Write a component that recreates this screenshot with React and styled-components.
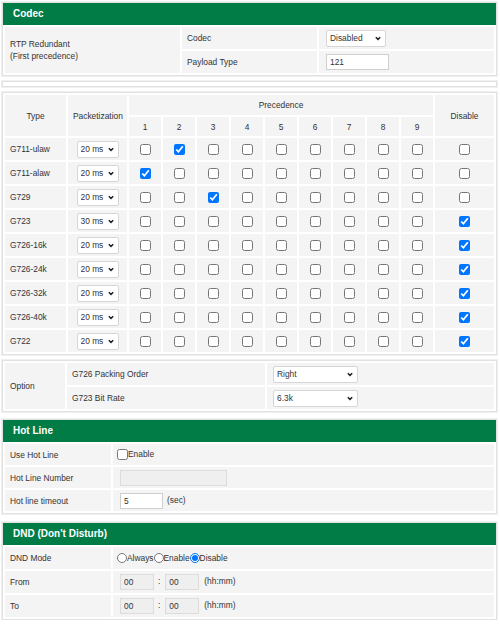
import React from "react";
import styled, { createGlobalStyle } from "styled-components";

const GREEN = "#027c46";

const Global = createGlobalStyle`
  body {
    margin: 0;
    background: #fff;
    font-family: "Liberation Sans", Arial, sans-serif;
    font-size: 8.4px;
    color: #333;
  }
`;

const Page = styled.div`
  width: 495px;
  margin: 2px 0 0 2px;
  display: flex;
  flex-direction: column;
  gap: 5px;
`;

const Panel = styled.div`
  border: 1px solid #e2e2e2;
  box-shadow: 0 0 0 1px #f0f0f0;
  background: #fff;
  margin-top: ${(p) => p.$mt || 0}px;
`;

const Spacer = styled(Panel)`
  height: 4px;
`;

const Header = styled.div`
  background: ${GREEN};
  color: #fff;
  font-weight: bold;
  font-size: 10px;
  height: 22px;
  line-height: 22px;
  padding-left: 10px;
`;

const Table = styled.table`
  width: 100%;
  border-spacing: 2px;
  table-layout: fixed;
`;

const Cell = styled.td`
  background: #f4f4f4;
  height: ${(p) => p.$h || 21}px;
  padding: 0 ${(p) => (p.$pad != null ? p.$pad : 5)}px;
  text-align: ${(p) => p.$align || "left"};
  vertical-align: middle;
  white-space: nowrap;
  line-height: 12px;
`;

const HeadCell = styled(Cell).attrs({ as: "th" })`
  font-weight: normal;
`;

const SelectWrap = styled.span`
  position: relative;
  display: inline-block;
  vertical-align: middle;
  width: ${(p) => p.$w}px;
  height: 17px;
`;

const NativeSelect = styled.select`
  appearance: none;
  -webkit-appearance: none;
  font-family: "Liberation Sans", Arial, sans-serif;
  font-size: 8.4px;
  color: #333;
  width: 100%;
  height: 17px;
  box-sizing: border-box;
  padding: 0 12px 0 3px;
  margin: 0;
  border: 1px solid #d6d6d6;
  border-radius: 2px;
  background: #fff;
  display: block;
`;

const Chevron = styled.svg`
  position: absolute;
  right: 5px;
  top: 6px;
  width: 6px;
  height: 5px;
  pointer-events: none;
`;

const Select = ({ w, value, options }) => (
  <SelectWrap $w={w}>
    <NativeSelect defaultValue={value}>
      {options.map((o) => (
        <option key={o}>{o}</option>
      ))}
    </NativeSelect>
    <Chevron viewBox="0 0 6 5">
      <path d="M0.8 1.2 L3 3.4 L5.2 1.2" fill="none" stroke="#222" strokeWidth="1.5" />
    </Chevron>
  </SelectWrap>
);

const Input = styled.input`
  font-family: "Liberation Sans", Arial, sans-serif;
  font-size: 8.4px;
  color: #333;
  height: 16px;
  width: ${(p) => p.$w}px;
  box-sizing: border-box;
  padding: 0 3px;
  border: 1px solid ${(p) => (p.disabled ? "#dcdcdc" : "#cfcfcf")};
  background: ${(p) => (p.disabled ? "#efefef" : "#fff")};
  vertical-align: middle;
  margin-left: ${(p) => p.$ml || 0}px;
`;

const Check = styled.input`
  margin: 0;
  width: 11px;
  height: 11px;
  vertical-align: middle;
`;

const Inline = styled.label`
  display: inline-flex;
  align-items: center;
  margin-top: 2px;
`;

const Radio = styled.input`
  margin: 0;
  width: 10px;
  height: 10px;
`;

const Note = styled.span`
  margin-left: ${(p) => p.$ml || 4}px;
`;

const codecs = [
  ["G711-ulaw", "20 ms", 2, false],
  ["G711-alaw", "20 ms", 1, false],
  ["G729", "20 ms", 3, false],
  ["G723", "30 ms", 0, true],
  ["G726-16k", "20 ms", 0, true],
  ["G726-24k", "20 ms", 0, true],
  ["G726-32k", "20 ms", 0, true],
  ["G726-40k", "20 ms", 0, true],
  ["G722", "20 ms", 0, true],
];

const nums = [1, 2, 3, 4, 5, 6, 7, 8, 9];
const packets = ["10 ms", "20 ms", "30 ms", "40 ms"];

const App = () => {
  return (
    <Page>
      <Global />
      <Panel>
        <Header>Codec</Header>
        <Table>
          <colgroup>
            <col style={{ width: 175 }} />
            <col style={{ width: 135 }} />
            <col />
          </colgroup>
          <tbody>
            <tr>
              <Cell rowSpan={2} $h={22}>
                RTP Redundant
                <br />
                (First precedence)
              </Cell>
              <Cell $h={22}>Codec</Cell>
              <Cell $h={22} $pad={7}>
                <Select w={60} value="Disabled" options={["Disabled", "Enabled"]} />
              </Cell>
            </tr>
            <tr>
              <Cell $h={22}>Payload Type</Cell>
              <Cell $h={22} $pad={7}>
                <Input $w={63} defaultValue="121" />
              </Cell>
            </tr>
          </tbody>
        </Table>
      </Panel>

      <Spacer />

      <Panel>
        <Table>
          <colgroup>
            <col style={{ width: 61 }} />
            <col style={{ width: 59 }} />
            {nums.map((n) => (
              <col key={n} style={{ width: 32 }} />
            ))}
            <col />
          </colgroup>
          <thead>
            <tr>
              <HeadCell rowSpan={2} $align="center">Type</HeadCell>
              <HeadCell rowSpan={2} $align="center">Packetization</HeadCell>
              <HeadCell colSpan={9} $h={20} $align="center">Precedence</HeadCell>
              <HeadCell rowSpan={2} $align="center">Disable</HeadCell>
            </tr>
            <tr>
              {nums.map((n) => (
                <HeadCell key={n} $h={19} $align="center">{n}</HeadCell>
              ))}
            </tr>
          </thead>
          <tbody>
            {codecs.map(([name, pkt, prec, dis]) => (
              <tr key={name}>
                <Cell $h={22}>{name}</Cell>
                <Cell $h={22} $align="center" $pad={0}>
                  <Select w={42} value={pkt} options={packets} />
                </Cell>
                {nums.map((n) => (
                  <Cell key={n} $h={22} $align="center" $pad={0}>
                    <Check type="checkbox" defaultChecked={prec === n} />
                  </Cell>
                ))}
                <Cell $h={22} $align="center" $pad={0}>
                  <Check type="checkbox" defaultChecked={dis} />
                </Cell>
              </tr>
            ))}
          </tbody>
        </Table>
      </Panel>

      <Panel>
        <Table>
          <colgroup>
            <col style={{ width: 60 }} />
            <col style={{ width: 198 }} />
            <col />
          </colgroup>
          <tbody>
            <tr>
              <Cell rowSpan={2}>Option</Cell>
              <Cell $h={22}>G726 Packing Order</Cell>
              <Cell $h={22} $pad={6}>
                <Select w={85} value="Right" options={["Right", "Left"]} />
              </Cell>
            </tr>
            <tr>
              <Cell $h={22}>G723 Bit Rate</Cell>
              <Cell $h={22} $pad={6}>
                <Select w={85} value="6.3k" options={["6.3k", "5.3k"]} />
              </Cell>
            </tr>
          </tbody>
        </Table>
      </Panel>

      <Panel $mt={2}>
        <Header>Hot Line</Header>
        <Table>
          <colgroup>
            <col style={{ width: 106 }} />
            <col />
          </colgroup>
          <tbody>
            <tr>
              <Cell>Use Hot Line</Cell>
              <Cell $pad={4}>
                <Inline>
                  <Check type="checkbox" />
                  Enable
                </Inline>
              </Cell>
            </tr>
            <tr>
              <Cell>Hot Line Number</Cell>
              <Cell $pad={7}>
                <Input $w={107} disabled />
              </Cell>
            </tr>
            <tr>
              <Cell>Hot line timeout</Cell>
              <Cell $pad={7}>
                <Input $w={43} defaultValue="5" />
                <Note>(sec)</Note>
              </Cell>
            </tr>
          </tbody>
        </Table>
      </Panel>

      <Panel $mt={3}>
        <Header>DND (Don't Disturb)</Header>
        <Table>
          <colgroup>
            <col style={{ width: 106 }} />
            <col />
          </colgroup>
          <tbody>
            <tr>
              <Cell $h={22}>DND Mode</Cell>
              <Cell $h={22} $pad={4}>
                <Inline>
                  <Radio type="radio" name="dnd" />
                  Always
                  <Radio type="radio" name="dnd" />
                  Enable
                  <Radio type="radio" name="dnd" defaultChecked />
                  Disable
                </Inline>
              </Cell>
            </tr>
            {["From", "To"].map((l) => (
              <tr key={l}>
                <Cell $h={22}>{l}</Cell>
                <Cell $h={22} $pad={7}>
                  <Input $w={34} disabled defaultValue="00" />
                  <Note $ml={4}>:</Note>
                  <Input $w={34} $ml={5} disabled defaultValue="00" />
                  <Note $ml={5}>(hh:mm)</Note>
                </Cell>
              </tr>
            ))}
          </tbody>
        </Table>
      </Panel>
    </Page>
  );
};

export default App;
